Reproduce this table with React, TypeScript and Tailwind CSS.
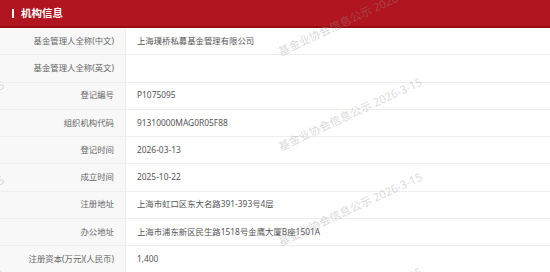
import React from "react";

const rows: [string, string][] = [
  ["基金管理人全称(中文)", "上海璞桥私募基金管理有限公司"],
  ["基金管理人全称(英文)", ""],
  ["登记编号", "P1075095"],
  ["组织机构代码", "91310000MAG0R05F88"],
  ["登记时间", "2026-03-13"],
  ["成立时间", "2025-10-22"],
  ["注册地址", "上海市虹口区东大名路391-393号4层"],
  ["办公地址", "上海市浦东新区民生路1518号金鹰大厦B座1501A"],
  ["注册资本(万元)(人民币)", "1,400"],
];

const wmText = "基金业协会信息公示 2026-3-15";
const wmCls =
  "absolute whitespace-nowrap text-[11.3px] leading-none -translate-x-1/2 -translate-y-1/2 -rotate-[25deg] text-[rgba(150,150,150,0.38)]";

export default function App() {
  return (
    <div
      className="relative w-[550px] h-[272px] overflow-hidden bg-white"
      style={{ fontFamily: '"Noto Sans", "Noto Sans CJK SC", sans-serif' }}
    >
      <div className="h-[28px] bg-[#b1151f] border-b-2 border-[#980c14] flex items-center pl-[12px]">
        <div className="w-[2px] h-[9px] bg-white" />
        <div className="ml-[7px] text-white font-bold text-[10.5px] leading-none">机构信息</div>
      </div>
      <div className="flex flex-col">
        {rows.map(([k, v]) => (
          <div key={k} className="flex h-[27.25px] shrink-0 border-b border-[#eeeeee]">
            <div className="w-[126px] shrink-0 bg-[#f8f8f8] border-r border-[#eeeeee] flex items-center justify-end pr-[11px] text-[8.4px] text-[#666]">
              {k}
            </div>
            <div className="flex-1 flex items-center pl-[11px] text-[8.4px] text-[#555]">{v}</div>
          </div>
        ))}
      </div>
      <div className="absolute inset-0 pointer-events-none">
        <span className={`${wmCls} left-[350px] top-[19px]`}>{wmText}</span>
        <span className={`${wmCls} left-[350px] top-[114px]`}>{wmText}</span>
        <span className={`${wmCls} left-[350px] top-[209px]`}>{wmText}</span>
        <span className={`${wmCls} left-[350px] top-[304px]`}>{wmText}</span>
        <span className={`${wmCls} left-[-68px] top-[117px]`}>{wmText}</span>
        <span className={`${wmCls} left-[-68px] top-[212px]`}>{wmText}</span>
        <span className={`${wmCls} left-[-68px] top-[307px]`}>{wmText}</span>
      </div>
    </div>
  );
}
